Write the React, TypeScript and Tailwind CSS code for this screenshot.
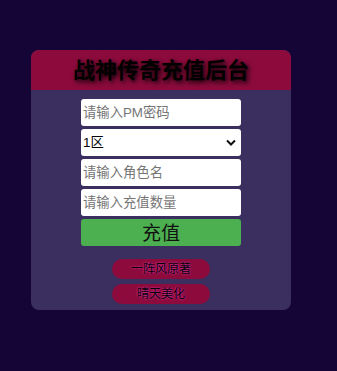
// Recharge admin panel: single card with a form and two link buttons

const fontStack = "font-['Liberation_Sans','Noto_Sans_CJK_SC',sans-serif]"

function Field({ placeholder }: { placeholder: string }) {
  return (
    <input
      type="text"
      placeholder={placeholder}
      className="h-[27px] w-full rounded-[3px] bg-white px-[2px] text-[13.33px] text-black outline-none placeholder:text-[#757575]"
    />
  )
}

function LinkButton({ label }: { label: string }) {
  return (
    <button className="h-[20px] w-[98px] rounded-[10px] bg-[#8c0b3c] text-[12px] leading-[20px] text-black [text-shadow:0_0_2px_#ff3fd0]">
      {label}
    </button>
  )
}

export default function App() {
  return (
    <div className={`min-h-screen bg-[#150536] pl-[31px] pt-[50px] ${fontStack}`}>
      <div className="w-[260px] overflow-hidden rounded-[8px] bg-[#3b2f5f]">
        {/* Header */}
        <div className="flex h-[40px] items-center justify-center bg-[#8c0b3c]">
          <h1 className="text-[22px] font-bold text-black [text-shadow:2px_2px_5px_#000]">
            战神传奇充值后台
          </h1>
        </div>

        {/* Form */}
        <div className="flex flex-col items-center pt-[9px] pb-[6px]">
          <div className="flex w-[160px] flex-col gap-[3px]">
            <Field placeholder="请输入PM密码" />
            <div className="relative h-[27px] w-full">
              <select className="h-full w-full appearance-none rounded-[3px] bg-white px-[2px] text-[13.33px] text-black outline-none">
                <option>1区</option>
                <option>2区</option>
              </select>
              <svg
                className="pointer-events-none absolute right-[5px] top-[10px]"
                width="10"
                height="7"
                viewBox="0 0 10 7"
              >
                <path d="M1 1.5 L5 5.5 L9 1.5" fill="none" stroke="#111" strokeWidth="2" />
              </svg>
            </div>
            <Field placeholder="请输入角色名" />
            <Field placeholder="请输入充值数量" />
            <button className="h-[27px] w-full rounded-[3px] bg-[#4caf50] text-[19px] leading-[29px] text-[#111]">
              充值
            </button>
          </div>

          <div className="mt-[13px] flex flex-col items-center gap-[5px]">
            <LinkButton label="一阵风原著" />
            <LinkButton label="晴天美化" />
          </div>
        </div>
      </div>
    </div>
  )
}
